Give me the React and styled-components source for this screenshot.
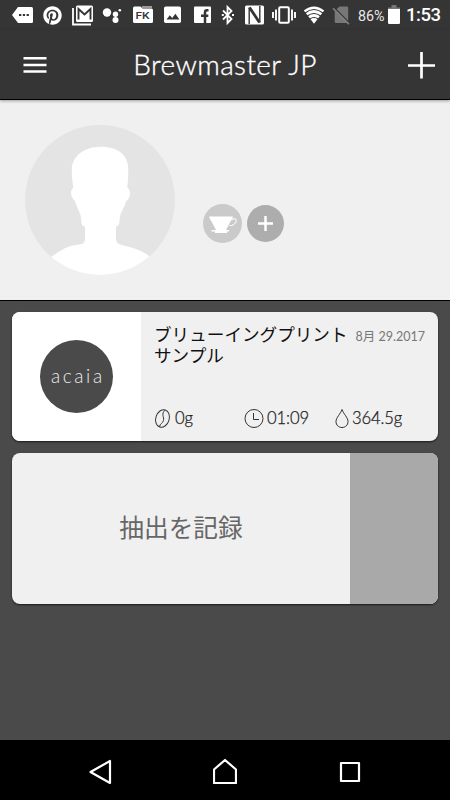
import React from "react";
import styled, { createGlobalStyle } from "styled-components";
import { FaPinterest } from "react-icons/fa";

const GlobalStyle = createGlobalStyle`
  * { box-sizing: border-box; }
  body { margin: 0; background: #4a4a4a; }
`;

const Screen = styled.main`
  width: 450px;
  height: 800px;
  display: flex;
  flex-direction: column;
  overflow: hidden;
  background: #4a4a4a;
  font-family: Lato, "Noto Sans CJK JP", sans-serif;
`;

const StatusBar = styled.div`
  height: 30px;
  flex: none;
  display: flex;
  align-items: center;
  padding-left: 12px;
  background: #353535;
  color: #fff;
  font-family: Roboto, sans-serif;
`;

const StatusIcon = styled.svg`
  display: block;
  flex: none;
  width: ${(p) => p.$w}px;
  height: 24px;
  margin-right: ${(p) => p.$gap}px;
  overflow: visible;
`;

const PinterestSlot = styled.span`
  display: flex;
  width: 19px;
  margin-right: 10px;
  font-size: 19px;
`;

const Battery = styled.span`
  width: 30px;
  flex: none;
  font-size: 14.3px;
  line-height: 30px;
  padding-top: 1px;
  color: #e8e8e8;
`;

const Clock = styled.time`
  font-size: 18.5px;
  line-height: 30px;
  font-weight: 500;
  letter-spacing: -0.5px;
`;

const Header = styled.header`
  position: relative;
  height: 70px;
  flex: none;
  display: grid;
  grid-template-columns: 90px 1fr 90px;
  align-items: center;
  background: #353535;
  border-bottom: 1px solid #000;
  box-shadow: 0 1px 3px rgba(0, 0, 0, 0.35);
  color: #fff;
`;

const HeaderButton = styled.button`
  display: flex;
  justify-content: ${(p) => (p.$end ? "flex-end" : "flex-start")};
  padding: 1px ${(p) => (p.$end ? 15 : 23)}px 0;
  border: 0;
  background: none;
`;

const Title = styled.h1`
  margin: 0;
  padding-bottom: 2px;
  text-align: center;
  white-space: nowrap;
  font-size: 28px;
  line-height: 34px;
  font-weight: 300;
  letter-spacing: 0.4px;
  -webkit-text-stroke: 0.35px #fff;
`;

const Profile = styled.section`
  height: 201px;
  flex: none;
  display: flex;
  align-items: flex-start;
  padding: 25px 25px 0;
  background: #f0f0f0;
  border-bottom: 1px solid #000;
`;

const Avatar = styled.svg`
  width: 150px;
  height: 150px;
  border-radius: 50%;
  background: #e4e4e4;
`;

const Badges = styled.div`
  display: flex;
  align-items: center;
  gap: 5px;
  margin: 79px 0 0 28px;
`;

const Badge = styled.svg`
  width: ${(p) => p.$size}px;
  height: ${(p) => p.$size}px;
  border-radius: 50%;
  background: ${(p) => p.$tone};
`;

const Feed = styled.div`
  flex: 1;
  display: flex;
  flex-direction: column;
  gap: 12px;
  padding: 11px 12px 0;
`;

const Card = styled.article`
  display: flex;
  height: ${(p) => p.$height}px;
  flex: none;
  overflow: hidden;
  border-radius: 8px;
  background: #f0f0f0;
  box-shadow: 0 1px 2px rgba(0, 0, 0, 0.65);
`;

const Cover = styled.div`
  width: 129px;
  flex: none;
  display: flex;
  align-items: center;
  justify-content: center;
  background: #fff;
`;

const Brand = styled.div`
  width: 73px;
  height: 73px;
  border-radius: 50%;
  background: #4a4a4a;
  color: #ececec;
  text-align: center;
  font-size: 19px;
  line-height: 71px;
  font-weight: 300;
  letter-spacing: 2.6px;
  text-indent: 2.6px;
`;

const Details = styled.div`
  flex: 1;
  min-width: 0;
  display: flex;
  flex-direction: column;
  justify-content: space-between;
  padding: 12px 13px 10px 13px;
`;

const Heading = styled.div`
  display: flex;
  justify-content: space-between;
`;

const CardTitle = styled.h2`
  margin: 0;
  font-size: 17.6px;
  line-height: 21px;
  font-weight: 400;
  color: #111;
  white-space: nowrap;
`;

const DateLabel = styled.time`
  font-size: 12.5px;
  line-height: 25px;
  color: #777;
  white-space: nowrap;
`;

const Stats = styled.div`
  display: grid;
  grid-template-columns: 90px 91px 1fr;
`;

const Stat = styled.div`
  display: flex;
  align-items: center;
  gap: ${(p) => p.$gap}px;
  font-size: 16.6px;
  line-height: 26px;
  font-weight: 300;
  color: #222;
  -webkit-text-stroke: 0.25px #222;
  letter-spacing: -0.1px;
`;

const StatIcon = styled.svg`
  width: ${(p) => p.$w}px;
  height: 21px;
  fill: none;
  stroke: #333;
  stroke-width: 1;
`;

const RecordLabel = styled.div`
  flex: 1;
  display: flex;
  align-items: center;
  justify-content: center;
  font-size: 24.7px;
  line-height: 36px;
  padding-bottom: 2px;
  color: #666;
`;

const RecordHandle = styled.div`
  width: 88px;
  background: #a9a9a9;
`;

const NavBar = styled.nav`
  height: 60px;
  flex: none;
  display: flex;
  align-items: center;
  justify-content: space-between;
  padding: 3px 88px 0;
  background: #000;
`;

const NavIcon = styled.svg`
  width: 24px;
  height: 28px;
  fill: none;
  stroke: #fff;
  stroke-width: 2.2;
  stroke-linejoin: round;
`;

function StatusIcons() {
  return (
    <>
      <StatusIcon $w={21} $gap={10} viewBox="0 0 21 24">
        <path d="M6 4h13.500q1.500 0 1.500 1.500v13q0 1.500-1.500 1.500H6L0 12Z" fill="#fff" />
        <path d="M7 12h2.300m1.500 0h2.300m1.500 0h2.300" stroke="#353535" strokeWidth="2.200" />
      </StatusIcon>
      <PinterestSlot><FaPinterest /></PinterestSlot>
      <StatusIcon $w={21} $gap={10} viewBox="0 0 21 24">
        <path d="M5.500 2.500h14q1.500 0 1.500 1.500v13.500q0 1.500-1.500 1.500h-14Q4 19 4 17.500V4q0-1.500 1.500-1.500Z" fill="#fff" />
        <path d="M6.500 16.500V6l6 5.500L18.500 6v10.500" fill="none" stroke="#353535" strokeWidth="1.900" />
        <path d="M1 5v16.500h18" fill="none" stroke="#fff" strokeWidth="1.800" />
      </StatusIcon>
      <StatusIcon $w={18} $gap={12} viewBox="0 0 18 24" fill="#fff">
        <circle cx="4" cy="9.500" r="4.200" /><circle cx="12.500" cy="11.200" r="2.700" />
        <circle cx="16.800" cy="7.200" r="1.300" /><circle cx="12.500" cy="17" r="3" />
      </StatusIcon>
      <StatusIcon $w={20} $gap={11} viewBox="0 0 20 24">
        <path d="M1.500 3.500h6l2 2h9q1.500 0 1.500 1.500v11.500q0 1.500-1.500 1.500h-17Q0 20 0 18.500V5q0-1.500 1.500-1.500Z" fill="#fff" />
        <path d="M9 4h10" stroke="#fff" />
        <text x="2.500" y="16.300" fontSize="9.500" fontWeight="500" fill="#353535" textLength="14" lengthAdjust="spacingAndGlyphs">FK</text>
      </StatusIcon>
      <StatusIcon $w={17} $gap={13} viewBox="0 0 17 24">
        <rect y="3.500" width="17" height="16.500" rx="1.700" fill="#fff" />
        <path d="m2.500 16.500 3.300-4.300 2.400 2.800 3.200-4.200 4 5.700Z" fill="#353535" />
      </StatusIcon>
      <StatusIcon $w={17} $gap={10} viewBox="0 0 17 24">
        <rect y="3.500" width="17" height="16.500" rx="1" fill="#fff" />
        <path d="M14.500 7.300h-1.500q-2 0-2 2v10.900M7 12.700h7.300" fill="none" stroke="#353535" strokeWidth="2.500" />
      </StatusIcon>
      <StatusIcon $w={14} $gap={10} viewBox="0 0 14 24">
        <path d="m2 7.500 8.500 8.500-4 4V4l4 4L2 16.500" fill="none" stroke="#fff" strokeWidth="1.800" />
        <path d="M.8 12h2m8.200 0h2" stroke="#fff" strokeWidth="2" />
      </StatusIcon>
      <StatusIcon $w={20} $gap={7} viewBox="0 0 20 24">
        <rect y="2.500" width="19" height="19" rx="1.500" fill="#fff" />
        <path d="M4.200 4.500v16.500M14.800 3v16.500" fill="none" stroke="#353535" strokeWidth="1.400" />
        <path d="M4.500 4.500 14.500 19.500" stroke="#353535" strokeWidth="2.800" />
      </StatusIcon>
      <StatusIcon $w={24} $gap={7} viewBox="0 0 24 24" fill="none" stroke="#fff">
        <rect x="7.200" y="4.200" width="9.600" height="15.600" rx="1" strokeWidth="2" />
        <path d="M4 6.500v11M20 6.500v11M1 9v6M23 9v6" strokeWidth="1.900" />
      </StatusIcon>
      <StatusIcon $w={22} $gap={8} viewBox="0 0 22 24" fill="none">
        <path d="M.8 7.500Q11-.5 21.200 7.500L11 20.800Z" fill="#fff" />
        <path d="M2 10q9-7 18 0M4.300 13q6.700-5 13.400 0M6.800 16q4.200-3 8.400 0" stroke="#353535" strokeWidth="1.100" />
      </StatusIcon>
      <StatusIcon $w={17} $gap={8} viewBox="0 0 17 24">
        <path d="M6.500 3.500H14q1.200 0 1.200 1.200V20H3q-1.300 0-1.300-1.300V8Z" fill="#777" />
        <path d="M1 5 17 21" stroke="#353535" strokeWidth="2" />
        <path d="M0 5.300 16 21.300" stroke="#858585" strokeWidth="1.600" />
      </StatusIcon>
      <Battery>86%</Battery>
      <StatusIcon $w={12} $gap={6} viewBox="0 0 12 24">
        <path d="M3.500 2h5v2.500H12V9H0V4.500h3.500Z" fill="#757575" />
        <path d="M0 6h12v13.800q0 1.200-1.200 1.200H1.200Q0 21 0 19.800Z" fill="#fff" />
      </StatusIcon>
      <Clock>1:53</Clock>
    </>
  );
}

export default function App() {
  return (
    <Screen>
      <GlobalStyle />
      <StatusBar><StatusIcons /></StatusBar>
      <Header>
        <HeaderButton aria-label="Menu">
          <svg width="24" height="18" viewBox="0 0 24 18" stroke="#fff" strokeWidth="2.400">
            <path d="M0.500 2.300h23M.5 9h23M.5 15.500h23" />
          </svg>
        </HeaderButton>
        <Title>Brewmaster JP</Title>
        <HeaderButton $end aria-label="Add">
          <svg width="27" height="27" viewBox="0 0 27 27" stroke="#fff" strokeWidth="2.700">
            <path d="M13.500 0v26.500M0 13.500h27" />
          </svg>
        </HeaderButton>
      </Header>
      <Profile>
        <Avatar viewBox="0 0 150 150">
          <path fill="#fff" d="M76 21.700C57 21.700 47 33 46.800 44c-.1 8 .7 13 1.600 18.700-3.500 3-3.300 9 1.600 13.300 1.500 7 6 11 6.300 19.500 0 4.500 1 5.500 3.700 6.200v11c0 5-1.500 6.300-5.500 6.700C42 120.500 36 125 26 132v18h99v-18.500c-8-6-14.500-8-28-11.500-5-1-6-3-6-8v-10.300c3-1 3.500-3 3.500-6.700.5-8 5-12 6.500-18.500 5-4 5.500-11 1.300-13.800.7-6.700 1-11.700 1-18.700C103.300 31 94 21.700 76 21.700Z" />
        </Avatar>
        <Badges>
          <Badge $size={39} $tone="#cacaca" viewBox="0 0 39 39">
            <path fill="#fff" d="M6 12.500h24q-.2 2-2 4l-5 9.500h3v1.500h-2v1.500H12v-1.500H8.500V26h4.500l-5-9.500Q6.500 14.500 6 12.500Z" />
            <path fill="none" stroke="#fff" strokeWidth="1" d="M28.500 16q3-2.500 4.500-.8 1 3-2 5.300-2.500 1.500-4.500 1" />
          </Badge>
          <Badge $size={37} $tone="#adadad" viewBox="0 0 37 37">
            <path d="M18.500 11v15M11 18.500h15" stroke="#fff" strokeWidth="2.500" />
          </Badge>
        </Badges>
      </Profile>
      <Feed>
        <Card $height={129}>
          <Cover><Brand>acaia</Brand></Cover>
          <Details>
            <Heading>
              <CardTitle>ブリューイングプリント<br />サンプル</CardTitle>
              <DateLabel>8月 29.2017</DateLabel>
            </Heading>
            <Stats>
              <Stat $gap={4}>
                <StatIcon $w={17} viewBox="0 0 17 21">
                  <ellipse cx="8.500" cy="10.500" rx="6.700" ry="9" transform="rotate(18 8.500 10.500)" />
                  <path d="M11.300 2C6.500 6 10.500 9 9.500 12.500S6 15 5.500 19" />
                </StatIcon>
                0g
              </Stat>
              <Stat $gap={3}>
                <StatIcon $w={20} viewBox="0 0 20 21">
                  <circle cx="10" cy="10.500" r="9" />
                  <path d="M9.500 5v6.500H15" />
                </StatIcon>
                01:09
              </Stat>
              <Stat $gap={3}>
                <StatIcon $w={14} viewBox="0 0 14 21">
                  <path d="M7 1.500C5.500 6 1 9.500 1 13.500c0 3.700 2.700 6 6 6s6-2.300 6-6c0-4-4.500-7.500-6-12Z" />
                </StatIcon>
                364.5g
              </Stat>
            </Stats>
          </Details>
        </Card>
        <Card $height={151}>
          <RecordLabel>抽出を記録</RecordLabel>
          <RecordHandle />
        </Card>
      </Feed>
      <NavBar>
        <NavIcon viewBox="0 0 24 28"><path d="M22 3v22L2.500 14Z" /></NavIcon>
        <NavIcon viewBox="0 0 24 28"><path d="M1 25V11.500L12 2l11 9.500V25Z" /></NavIcon>
        <NavIcon viewBox="0 0 24 28"><rect x="3" y="5" width="18" height="18" /></NavIcon>
      </NavBar>
    </Screen>
  );
}
